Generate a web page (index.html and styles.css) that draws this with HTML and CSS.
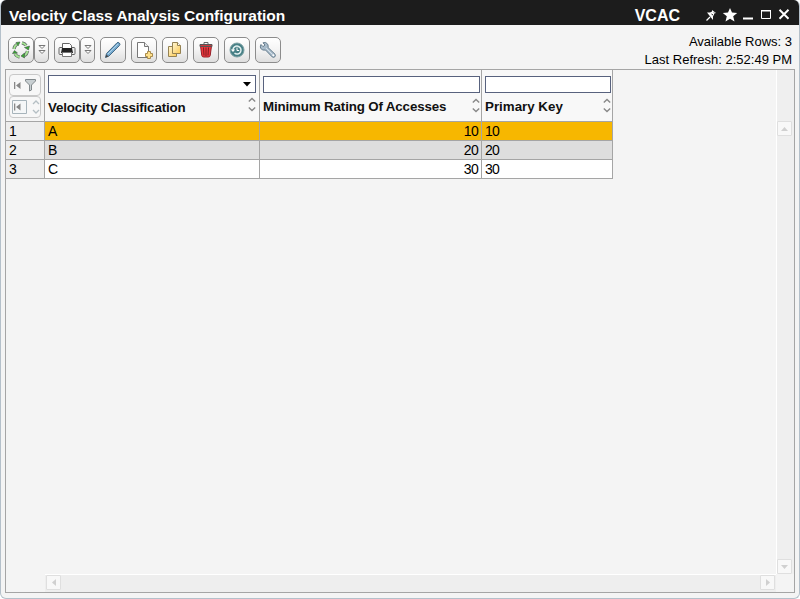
FILE: index.html
```html
<!DOCTYPE html>
<html lang="en">
<head>
<meta charset="utf-8">
<title>Velocity Class Analysis Configuration</title>
<link rel="stylesheet" href="styles.css">
</head>
<body>
<svg width="0" height="0" class="defs">
  <defs>
    <symbol id="double-down" viewBox="0 0 8 12"><path d="M1 1.500h6L4 4.500zM1 6.500h6L4 9.500z" fill="#fff" stroke="#777"/></symbol>
    <symbol id="sort" viewBox="0 0 8 15"><path d="M.8 4.500L4 1.500 7.200 4.500M.8 10.500L4 13.500 7.200 10.500" fill="none" stroke="currentColor" stroke-width="1.400"/></symbol>
    <linearGradient id="page" x2="1" y2="1"><stop stop-color="#fff7d5"/><stop offset="1" stop-color="#fbc954"/></linearGradient>
  </defs>
</svg>
<div class="window">
  <header class="titlebar">
    <h1 class="title">Velocity Class Analysis Configuration</h1>
    <span class="code">VCAC</span>
    <svg class="window-icons" width="86" height="16" viewBox="0 0 86 16">
      <path d="M0.500 12.500L4 9" stroke="#fff" stroke-width="1.300"/>
      <path d="M1 4.500h3L6 3.500V2l4 3-1.500.5L7 8.500V12z" fill="#fff"/><path d="M5.500 6l1.500 1M8 4.500l1 1" stroke="#222"/>
      <path d="M24 0l2 4.600 5.200.3-4 3.400 1.300 5.200L24 10.700l-4.500 2.800L20.800 8.300l-4-3.400 5.200-.3z" fill="#fff"/>
      <path d="M37 9.500h10v2H37z" fill="#fff"/>
      <path d="M55.500 2.500h9v8h-9z" fill="none" stroke="#fff"/><path d="M55 2h10v1.500H55z" fill="#fff"/>
      <path d="M73.500 1.800l9 9M82.500 1.800l-9 9" stroke="#fff" stroke-width="2"/>
    </svg>
  </header>
  <div class="toolbar">
    <div class="tools">
      <div class="split">
        <button class="tool" aria-label="Refresh"><svg width="20" height="20" viewBox="0 0 20 20">
          <g fill="none" stroke="#65736a" stroke-width="3.400"><path d="M3 9Q3.500 6 5.500 4.500M11 2.800Q14 3.500 15 5.500M16.500 11Q16 14 13.500 15.500M8.500 17Q5.500 16.500 4 14"/></g>
          <g fill="none" stroke="#a5e592" stroke-width="1.800"><path d="M3 9Q3.500 6 5.500 4.500M11 2.800Q14 3.500 15 5.500M16.500 11Q16 14 13.500 15.500M8.500 17Q5.500 16.500 4 14"/></g>
          <path d="M13.500 7.500l5-1.500-1 4zM13.500 13l-3.500 3 3.500 2zM1.500 13.500l2-3 3 2.500zM5 2.500l4-.5-2 4z" fill="#38a832" stroke="#46584b" stroke-width=".6"/>
        </svg></button><button class="tool more" aria-label="Refresh options"><svg width="8" height="12"><use href="#double-down"/></svg></button>
      </div>
      <div class="split">
        <button class="tool" aria-label="Print"><svg width="20" height="20" viewBox="0 0 20 20">
          <path d="M3 7.500h14q1 0 1 1v5q0 1-1 1H3q-1 0-1-1v-5q0-1 1-1z" fill="#eee" stroke="#666"/>
          <path d="M5.500 8V3.500h7l2 2V8" fill="#fff" stroke="#666"/><path d="M5 8h10l1 5H4z" fill="#222"/>
          <path d="M5.500 12.500h9v4h-9z" fill="#fff" stroke="#777"/>
        </svg></button><button class="tool more" aria-label="Print options"><svg width="8" height="12"><use href="#double-down"/></svg></button>
      </div>
      <button class="tool" aria-label="Edit"><svg width="20" height="20" viewBox="0 0 20 20">
        <path d="M2.500 17.500l1-4L14 2.800q1-1 2.300.2t.2 2.500L6 16z" fill="#75a9ce" stroke="#456b88"/><path d="M5 14L15 4" stroke="#b1d4ea"/><path d="M2.500 17.500l1-3 2 2z" fill="#444"/>
      </svg></button>
      <button class="tool" aria-label="New"><svg width="20" height="20" viewBox="0 0 20 20">
        <path d="M3.500 2.500h7l4 4v11h-11z" fill="#fff" stroke="#777"/><path d="M10.500 2.500v4h4" fill="#eee" stroke="#777"/>
        <path d="M13.500 11.500h3v2h2v3h-2v2h-3v-2h-2v-3h2z" fill="#fee08a" stroke="#a98b4c"/>
      </svg></button>
      <button class="tool" aria-label="Copy"><svg width="20" height="20" viewBox="0 0 20 20">
        <path d="M3.500 6.500h8v10h-8z" fill="url(#page)" stroke="#958253"/><path d="M7.500 2.500h5l3 3v8h-8z" fill="url(#page)" stroke="#958253"/><path d="M12.500 2.500v3h3" fill="#fff" stroke="#958253"/>
      </svg></button>
      <button class="tool" aria-label="Delete"><svg width="20" height="20" viewBox="0 0 20 20">
        <path d="M4.500 6h11l-1.300 9.500q-.2 1.500-2 1.500H7.800q-1.800 0-2-1.500z" fill="#f0383e" stroke="#951f27"/>
        <path d="M7.500 7.500l.5 8M10 7.500v8.500M12.500 7.500l-.5 8" stroke="#781b20"/><path d="M4 4.500h12v2H4z" fill="#c83b3e" stroke="#555"/><path d="M8 4V2.500h4V4" fill="none" stroke="#666"/>
      </svg></button>
      <button class="tool" aria-label="History"><svg width="20" height="20" viewBox="0 0 20 20">
        <circle cx="10" cy="10" r="7" fill="#467f85" stroke="#7da1a4"/><path d="M6 10a4 4 0 1 1 1.500 3.200" fill="none" stroke="#e2f0f0" stroke-width="1.500"/><path d="M3.800 9.500h4.400L6 12z" fill="#fff"/><path d="M10 7.500v3h2.200" fill="none" stroke="#fff"/>
      </svg></button>
      <button class="tool" aria-label="Settings"><svg width="20" height="20" viewBox="0 0 20 20">
        <path d="M3 4.500L5 6.700 7 5 5 2.800Q8 1.500 9.700 4.200 10.500 6 10 7.500L17 14.200q1 1.500-.2 2.600t-2.600.1L7.500 10Q4 11 2.500 8 2 6 3 4.500z" fill="#a9bccb" stroke="#667d8d"/><path d="M8 8l6.500 6.500" stroke="#d5e0e8"/><circle cx="15.300" cy="15.300" r="1" fill="#fff"/>
      </svg></button>
    </div>
    <div class="status"><div>Available Rows: 3</div><div>Last Refresh: 2:52:49 PM</div></div>
  </div>
  <main class="panel">
    <div class="content">
      <div class="grid">
        <div class="cell head corner">
          <div class="nav-box"><svg width="30" height="20" viewBox="0 0 30 20">
            <path d="M4 7h1.300v7H4zM10.500 7v7l-4.500-3.500z" fill="#888"/><path d="M15.500 4.500h10v1.500l-4 4v5l-2 1v-6l-4-4z" fill="#c8cfd2" stroke="#82898c"/>
          </svg></div>
          <div class="nav-box"><svg width="30" height="20" viewBox="0 0 30 20">
            <path d="M2.500 3.500h14v13h-14z" fill="#f5f7f8" stroke="#a7b4bb"/><path d="M4 6.500h1.300v7H4zM10.500 6.500v7L6 10z" fill="#888"/><path d="M23 7l3-3 3 3M23 13l3 3 3-3" fill="none" stroke="#b5bfc4" stroke-width="1.300"/>
          </svg></div>
        </div>
        <div class="cell head wide"><div class="filter combo"><svg width="8" height="5"><path d="M0 0h8L4 4.500z"/></svg></div><div class="label">Velocity Classification<svg width="8" height="15"><use href="#sort"/></svg></div></div>
        <div class="cell head"><div class="filter"></div><div class="label">Minimum Rating Of Accesses<svg width="8" height="15"><use href="#sort"/></svg></div></div>
        <div class="cell head"><div class="filter"></div><div class="label key">Primary Key<svg width="8" height="15"><use href="#sort"/></svg></div></div>
        <div class="cell num">1</div><div class="cell selected">A</div><div class="cell selected right">10</div><div class="cell selected">10</div>
        <div class="cell num">2</div><div class="cell alt">B</div><div class="cell alt right">20</div><div class="cell alt">20</div>
        <div class="cell num">3</div><div class="cell">C</div><div class="cell right">30</div><div class="cell">30</div>
      </div>
    </div>
    <div class="vscroll"><span class="arrow"><svg width="7" height="4"><path d="M0 4l3.500-4L7 4z" fill="#d0d0d0"/></svg></span><span class="arrow"><svg width="7" height="4"><path d="M0 0h7L3.500 4z" fill="#d0d0d0"/></svg></span></div>
    <div class="hscroll"><span class="arrow"><svg width="4" height="7"><path d="M4 0v7L0 3.500z" fill="#d0d0d0"/></svg></span><span class="arrow"><svg width="4" height="7"><path d="M0 0v7l4-3.500z" fill="#d0d0d0"/></svg></span></div>
  </main>
</div>
</body>
</html>
```
FILE: styles.css
```css
* { box-sizing: border-box; }
body { margin: 0; background: #fff; font: 13px/18px "Liberation Sans", Arial, sans-serif; color: #000; overflow: hidden; }
.defs { position: absolute; }
svg { display: block; }
.window { display: flex; flex-direction: column; width: 800px; height: 599px; border: 1px solid #b4c0ca; border-top: 0; border-radius: 6px; background: #f4f4f4; overflow: hidden; }
.titlebar { display: flex; align-items: center; flex: none; height: 25px; margin: 0 -1px; padding: 6px 8px 0 9px; background: #1c1c1c; color: #fff; }
.title { flex: 1; margin: 0; font-size: 15.500px; line-height: 18px; letter-spacing: -.04px; }
.code { font-size: 16px; font-weight: bold; margin-right: 26px; }
.window-icons { flex: none; }
.toolbar { display: flex; justify-content: space-between; flex: none; height: 44px; padding: 8px 7px 0; }
.tools { display: flex; gap: 5px; padding-top: 4px; }
.split { display: flex; }
.tool { display: flex; align-items: center; justify-content: center; width: 26px; height: 26px; padding: 0; border: 1px solid #8c8c8c; border-radius: 5px; background: linear-gradient(#fff, #f5f5f5 45%, #dedede); }
.more { width: 15px; }
.status { text-align: right; font-size: 13px; }
.panel { display: grid; grid-template: 504px 18px / 770px 18px; flex: none; width: 790px; height: 524px; margin-left: 4px; border: 1px solid #a5a5a5; }
.grid { display: grid; grid-template-columns: 39px 215px 222px 131px; grid-template-rows: 52px repeat(3, 19px); width: 607px; }
.cell { border: solid #a5a5a5; border-width: 0 1px 1px 0; padding: 0 3px; background: #fff; font-size: 14px; line-height: 19px; letter-spacing: -.7px; }
.head { padding: 6px 1px 0 3px; background: #f8f8f8; }
.wide { padding-top: 5px; }
.corner { padding: 4px 3px 0; background: #f4f4f4; }
.nav-box { width: 32px; height: 22px; border: 1px solid #c8c8c8; border-radius: 4px; background: #f7f7f7; }
.filter { height: 17px; border: 1px solid #58627e; background: #fff; }
.combo { display: flex; align-items: center; justify-content: flex-end; height: 18px; padding-right: 4px; margin-right: 2px; }
.label { display: flex; justify-content: space-between; padding-top: 4px; font-weight: bold; font-size: 13.330px; line-height: 19px; letter-spacing: -.14px; white-space: nowrap; color: #111; }
.label svg { color: #888; margin-top: 1px; }
.key { letter-spacing: 0; }
.wide .label { padding: 5px 2px 0 0; }
.wide .label svg { margin-top: -1px; }
.num { background: #ededed; }
.selected { background: #f7b700; }
.alt { background: #dedede; }
.right { text-align: right; }
.vscroll { display: flex; flex-direction: column; justify-content: space-between; grid-row: 1 / 3; grid-column: 2; margin-bottom: 18px; padding-top: 51px; border-left: 1px solid #fff; background: #efefef; }
.hscroll { display: flex; justify-content: space-between; grid-row: 2; grid-column: 1; margin-left: 39px; padding: 0 1px; border-top: 1px solid #fff; background: #eee; }
.arrow { display: flex; align-items: center; justify-content: center; width: 15px; height: 15px; border: 1px solid #dfdfdf; border-radius: 1px; background: #f8f8f8; }
```
